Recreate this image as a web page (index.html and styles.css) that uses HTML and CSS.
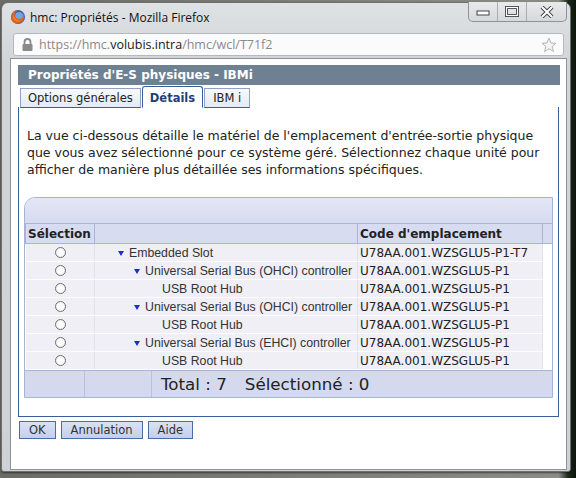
FILE: index.html
```html
<!DOCTYPE html>
<html lang="fr">
<head>
    <meta charset="UTF-8">
    <title>hmc: Propriétés</title>
    <link rel="stylesheet" href="styles.css">
</head>
<body>

    <div class="window">
        <div class="titlebar">
            <svg class="ff-icon" width="16" height="16" viewBox="0 0 16 16">
                <circle cx="8" cy="8" r="7" fill="#2f5fae"/>
                <circle cx="9" cy="7" r="4" fill="#6fa6e0"/>
                <path d="M2 5 C3 2 6 1 8 1 C5 3 4 5 5 7 C6 10 10 11 12 9 C14 7 13 4 12 3 C15 5 15 10 12 13 C9 15 4 15 2 12 C1 10 1 7 2 5 Z" fill="#e2641b"/>
                <path d="M3 6 C4 9 6 12 10 12 C7 13 3 11 3 6 Z" fill="#f6a23a"/>
            </svg>
            <span class="wtitle">hmc: Propriétés - Mozilla Firefox</span>
            <div class="wbtns">
                <span class="wb">
                    <svg width="14" height="8" viewBox="0 0 14 8"><rect x="1" y="3" width="12" height="4" fill="#fff" stroke="#444" stroke-width="1"/></svg>
                </span>
                <span class="wb">
                    <svg width="14" height="11" viewBox="0 0 14 11"><rect x="1.5" y="1.5" width="11" height="8" fill="none" stroke="#444" stroke-width="3"/><rect x="1.5" y="1.5" width="11" height="8" fill="none" stroke="#fff" stroke-width="1.2"/></svg>
                </span>
                <span class="wb wb-close">
                    <svg width="16" height="12" viewBox="0 0 16 12"><path d="M3 1 L13 11 M13 1 L3 11" stroke="#444" stroke-width="4"/><path d="M3 1 L13 11 M13 1 L3 11" stroke="#fff" stroke-width="2"/></svg>
                </span>
            </div>
        </div>

        <div class="urlbar">
            <svg class="lock" width="11" height="13" viewBox="0 0 11 13">
                <path d="M2.5 6 V4 A3 3 0 0 1 8.5 4 V6" fill="none" stroke="#8a8a8a" stroke-width="1.8"/>
                <rect x="0.5" y="6" width="10" height="7" rx="1" fill="#8a8a8a"/>
            </svg>
            <span class="url">https://hmc.<span class="host">volubis.intra</span>/hmc/wcl/T71f2</span>
            <svg class="star" width="16" height="16" viewBox="0 0 16 16">
                <path d="M8 1 L10 6 L15 6.3 L11.2 9.5 L12.5 14.5 L8 11.7 L3.5 14.5 L4.8 9.5 L1 6.3 L6 6 Z" fill="#f4f4f4" stroke="#b5b5b5" stroke-width="1"/>
            </svg>
        </div>

        <div class="page">
            <div class="dlg-title">Propriétés d'E-S physiques - IBMi</div>

            <div class="tabs">
                <div class="tab">Options générales</div>
                <div class="tab active">Détails</div>
                <div class="tab">IBM i</div>
            </div>

            <div class="panel">
                <p class="intro">La vue ci-dessous détaille le matériel de l'emplacement d'entrée-sortie physique que vous avez sélectionné pour ce système géré. Sélectionnez chaque unité pour afficher de manière plus détaillée ses informations spécifiques.</p>

                <div class="tbl">
                    <div class="tbl-top"></div>
                    <table>
                        <tr class="head">
                            <th class="c-sel">Sélection</th>
                            <th class="c-name"></th>
                            <th class="c-code">Code d'emplacement</th>
                            <th class="c-pad"></th>
                        </tr>
                        <tr>
                            <td class="c-sel"><span class="radio"></span></td>
                            <td class="c-name lvl1"><span class="tri"></span>Embedded Slot</td>
                            <td class="c-code">U78AA.001.WZSGLU5-P1-T7</td>
                            <td class="c-pad"></td>
                        </tr>
                        <tr>
                            <td class="c-sel"><span class="radio"></span></td>
                            <td class="c-name lvl2"><span class="tri"></span>Universal Serial Bus (OHCI) controller</td>
                            <td class="c-code">U78AA.001.WZSGLU5-P1</td>
                            <td class="c-pad"></td>
                        </tr>
                        <tr>
                            <td class="c-sel"><span class="radio"></span></td>
                            <td class="c-name lvl3">USB Root Hub</td>
                            <td class="c-code">U78AA.001.WZSGLU5-P1</td>
                            <td class="c-pad"></td>
                        </tr>
                        <tr>
                            <td class="c-sel"><span class="radio"></span></td>
                            <td class="c-name lvl2"><span class="tri"></span>Universal Serial Bus (OHCI) controller</td>
                            <td class="c-code">U78AA.001.WZSGLU5-P1</td>
                            <td class="c-pad"></td>
                        </tr>
                        <tr>
                            <td class="c-sel"><span class="radio"></span></td>
                            <td class="c-name lvl3">USB Root Hub</td>
                            <td class="c-code">U78AA.001.WZSGLU5-P1</td>
                            <td class="c-pad"></td>
                        </tr>
                        <tr>
                            <td class="c-sel"><span class="radio"></span></td>
                            <td class="c-name lvl2"><span class="tri"></span>Universal Serial Bus (EHCI) controller</td>
                            <td class="c-code">U78AA.001.WZSGLU5-P1</td>
                            <td class="c-pad"></td>
                        </tr>
                        <tr>
                            <td class="c-sel"><span class="radio"></span></td>
                            <td class="c-name lvl3">USB Root Hub</td>
                            <td class="c-code">U78AA.001.WZSGLU5-P1</td>
                            <td class="c-pad"></td>
                        </tr>
                    </table>
                    <div class="tbl-foot">
                        <div class="f1"></div>
                        <div class="f2"></div>
                        <div class="f3"><span>Total : 7</span><span>Sélectionné : 0</span></div>
                    </div>
                </div>
            </div>

            <div class="buttons">
                <button class="btn">OK</button>
                <button class="btn">Annulation</button>
                <button class="btn">Aide</button>
            </div>
        </div>
    </div>

</body>
</html>
```

FILE: styles.css
```css
*{
    margin: 0;
    padding: 0;
    box-sizing: border-box;
}

html, body{
    width: 576px;
    height: 478px;
    overflow: hidden;
}

body{
    background: linear-gradient(to right, #6c6c66 0, #8d8d88 97%, #1d2a1c 98.6%, #0d140c 100%);
    font-family: "DejaVu Sans", Verdana, sans-serif;
    padding: 2px 0 0 1px;
}

.window{
    width: 570px;
    height: 470px;
    border: 1px solid #6f6f6f;
    border-radius: 7px 7px 3px 3px;
    background: linear-gradient(#dfe2e4, #d2d5d8 60px, #cfd2d5);
    box-shadow: 0 1px 2px rgba(0, 0, 0, 0.5);
    padding: 0 0 0 8px;
}

/* title bar */
.titlebar{
    height: 28px;
    display: flex;
    align-items: center;
    position: relative;
}

.wtitle{
    font-family: "Open Sans", "Noto Sans", sans-serif;
    font-size: 12px;
    color: #111;
    margin-left: 4px;
    margin-top: 1px;
}

.wbtns{
    position: absolute;
    right: 3px;
    top: -1px;
    display: flex;
    height: 20px;
    border: 1px solid #8f9397;
    border-top: none;
    border-radius: 0 0 5px 5px;
    background: linear-gradient(#e8eaec, #d6d9dc);
    overflow: hidden;
}

.wb{
    width: 29px;
    display: flex;
    align-items: center;
    justify-content: center;
    border-right: 1px solid #a8acb0;
}

.wb-close{
    width: 39px;
    border-right: none;
}

/* url bar */
.urlbar{
    width: 551px;
    height: 23px;
    margin-top: 2px;
    margin-left: 3px;
    background: #fbfbfb;
    border: 1px solid #b5b9bd;
    border-radius: 3px;
    display: flex;
    align-items: center;
    padding: 0 6px 0 8px;
}

.url{
    font-family: "Open Sans", "Noto Sans", sans-serif;
    font-size: 12.5px;
    color: #8a8a8a;
    margin-left: 6px;
    flex: 1;
}

.url .host{
    color: #1a1a1a;
}

/* page */
.page{
    margin-top: 2px;
    width: 557px;
    height: 412px;
    background: #fff;
    border: 1px solid #8e9195;
    padding: 6px 6px 0 7px;
}

.dlg-title{
    background-color: #6e8193;
    color: #fff;
    font-weight: bold;
    font-size: 12px;
    height: 20px;
    line-height: 20px;
    padding-left: 10px;
}

.tabs{
    display: flex;
    margin-top: 2px;
    padding-left: 2px;
    height: 21px;
    align-items: flex-end;
}

.tab{
    font-size: 11.5px;
    color: #222;
    height: 20px;
    line-height: 19px;
    padding: 0 8px;
    border: 1px solid #8fa2c6;
    border-bottom: 1px solid #3b5d98;
    background: linear-gradient(#f8f9fc, #e4e9f4);
    margin-right: 1px;
}

.tab:first-child{
    padding: 0 7px;
}

.tab.active{
    height: 22px;
    line-height: 22px;
    background: #fff;
    border-color: #3b5d98;
    border-bottom-color: #fff;
    border-radius: 3px 3px 0 0;
    font-weight: bold;
    color: #1f3f7a;
    padding: 0 7px;
}

.panel{
    width: 541px;
    height: 310px;
    border: 1px solid #3b5d98;
    border-top: none;
    margin-top: -1px;
    padding: 20px 6px 0 5px;
}

.intro{
    font-size: 12.5px;
    line-height: 17px;
    color: #222;
    padding-left: 3px;
    width: 523px;
}

/* table */
.tbl{
    margin-top: 19px;
    width: 529px;
    border: 1px solid #a7b2d6;
    border-radius: 11px 0 0 0;
    overflow: hidden;
}

.tbl-top{
    height: 25px;
    background: linear-gradient(#e3e6f5, #d6dbef);
}

.tbl table{
    width: 100%;
    border-collapse: collapse;
    table-layout: fixed;
}

.tbl th, .tbl td{
    height: 18px;
    padding: 0;
    white-space: nowrap;
    overflow: hidden;
}

.tbl th{
    background-color: #d7dcf0;
    border: 1px solid #a9b4d9;
    font-size: 12px;
    font-weight: bold;
    color: #222;
    text-align: left;
    padding-left: 2px;
    height: 20px;
}

.tbl td{
    background-color: #efeff5;
    border: 1px solid #fdfdfe;
    border-right-color: #e0e1ea;
    font-size: 12px;
    color: #222;
}

.tbl .c-sel{ width: 69px; }
.tbl .c-name{ width: 263px; }
.tbl .c-code{ width: 185px; }
.tbl .c-pad{ width: 10px; }

.tbl th.c-pad{
    border-right: none;
}

.tbl td.c-pad{
    background: #fff;
    border: none;
}

.tbl td.c-sel{
    text-align: center;
}

.tbl td.c-code{
    padding-left: 2px;
}

.tbl td.c-name{
    font-family: "Liberation Sans", Arial, sans-serif;
    font-size: 12.3px;
    color: #333;
}

.radio{
    display: inline-block;
    width: 11px;
    height: 11px;
    border: 1px solid #6f6f6f;
    border-radius: 50%;
    background: radial-gradient(#fff 40%, #e4e4e4);
    vertical-align: middle;
    margin-top: -2px;
}

.tri{
    display: inline-block;
    width: 0;
    height: 0;
    border-left: 3.5px solid transparent;
    border-right: 3.5px solid transparent;
    border-top: 5px solid #1a2fd0;
    margin-right: 5px;
    vertical-align: middle;
}

.lvl1{ padding-left: 23px !important; }
.lvl2{ padding-left: 39px !important; }
.lvl3{ padding-left: 67px !important; }

.tbl-foot{
    display: flex;
    height: 27px;
    background-color: #d5d9ee;
    border-top: 1px solid #a9b4d9;
}

.tbl-foot .f1{ width: 60px; border-right: 1px solid #b8c1df; }
.tbl-foot .f2{ width: 67px; border-right: 1px solid #b8c1df; }

.tbl-foot .f3{
    padding-left: 9px;
    font-size: 16.7px;
    line-height: 26px;
    color: #222;
    display: flex;
    gap: 18px;
}

/* buttons */
.buttons{
    display: flex;
    gap: 5px;
    margin-top: 4px;
    padding-left: 1px;
}

.btn{
    font-family: "DejaVu Sans", Verdana, sans-serif;
    font-size: 11.5px;
    color: #333;
    height: 18px;
    padding: 0 9px;
    background: linear-gradient(#d8e2f3, #c3d0ea);
    border: 1px solid #4c6ca6;
}
```
